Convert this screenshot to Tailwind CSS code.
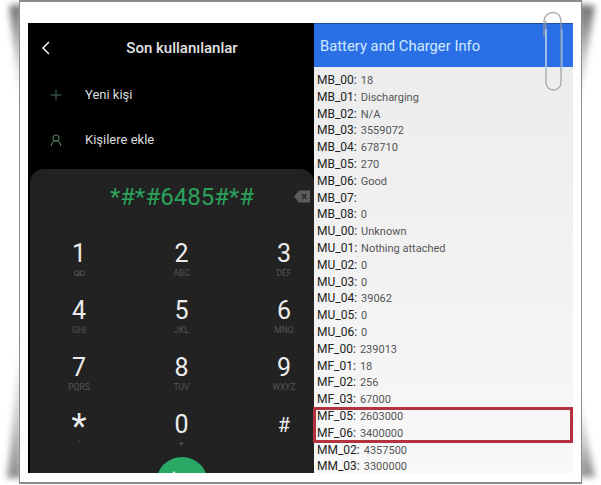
<!DOCTYPE html>
<html lang="en">
<head>
    <meta charset="UTF-8">
    <meta name="viewport" content="width=device-width, initial-scale=1.0">
    <title>Battery and Charger Info</title>
    <script src="https://cdn.jsdelivr.net/npm/@tailwindcss/browser@4"></script>
</head>
<body class="bg-white">
    <div class="relative w-[601px] h-[485px] overflow-hidden bg-white font-['Roboto',sans-serif]">
        <!-- Paper shadows behind the frame -->
        <svg class="absolute inset-0" width="601" height="485" viewBox="0 0 601 485">
            <defs>
                <filter id="soft" x="-50%" y="-50%" width="200%" height="200%"><feGaussianBlur stdDeviation="3"/></filter>
                <linearGradient id="fadeTop" x1="0" y1="0" x2="0" y2="1"><stop offset="0" stop-color="#707070"/><stop offset="0.5" stop-color="#c4c4c4"/><stop offset="1" stop-color="#fff"/></linearGradient>
                <linearGradient id="fadeBottom" x1="0" y1="0" x2="0" y2="1"><stop offset="0" stop-color="#fff"/><stop offset="0.6" stop-color="#c8c8c8"/><stop offset="1" stop-color="#8c8c8c"/></linearGradient>
            </defs>
            <polygon points="9,6 22,4 22,110" fill="url(#fadeTop)" filter="url(#soft)"/>
            <polygon points="22,330 22,478 7,478" fill="url(#fadeBottom)" filter="url(#soft)"/>
            <polygon points="578,4 595,6 578,110" fill="url(#fadeTop)" filter="url(#soft)"/>
            <polygon points="578,390 578,477 595,477" fill="url(#fadeBottom)" filter="url(#soft)"/>
        </svg>

        <!-- Framed picture -->
        <div class="absolute left-[19px] top-0 w-[563px] h-[484px] border-x border-y-2 border-[#8c8c8c] bg-white pl-2 pr-2 pt-[21px]">
            <div class="flex h-[450px]">
                <!-- Dialer -->
                <section class="w-[286px] shrink-0 bg-black flex flex-col overflow-hidden">
                    <header class="h-[49px] pt-px flex items-center relative shrink-0">
                        <svg class="ml-[12px]" width="12" height="16" viewBox="0 0 12 16" fill="none" stroke="#e8e8e8" stroke-width="1.6"><path d="M9 2 L3 8 L9 14"/></svg>
                        <h1 class="absolute left-0 w-[308px] text-center text-[15px] font-medium text-[#e4e4e4]">Son kullanılanlar</h1>
                    </header>
                    <div class="h-[45px] flex items-center shrink-0">
                        <svg class="ml-[22px]" width="12" height="12" viewBox="0 0 12 12" stroke="#4f6f5c" stroke-width="1"><path d="M6 0.5 V11.5 M0.5 6 H11.5"/></svg>
                        <span class="ml-[23px] text-[13px] text-[#dcdcdc]">Yeni kişi</span>
                    </div>
                    <div class="h-[46px] mb-[6px] flex items-center shrink-0">
                        <svg class="ml-[22px]" width="12" height="13" viewBox="0 0 12 13" fill="none" stroke="#4a7a5c" stroke-width="1.2"><circle cx="6" cy="4" r="3"/><path d="M1.2 12 C1.5 8.5 3.5 7 6 7 C8.5 7 10.5 8.5 10.8 12"/></svg>
                        <span class="ml-[23px] text-[13px] text-[#dcdcdc]">Kişilere ekle</span>
                    </div>
                    <!-- Keypad -->
                    <div class="relative flex-1 ml-[2px] rounded-t-[14px] bg-[#222223] overflow-hidden">
                        <div class="h-[68px] pb-[12px] flex items-center">
                            <span class="ml-[80px] text-[24px] text-[#2ba25c]">*#*#6485#*#</span>
                            <svg class="absolute left-[264px] top-[21px]" width="16" height="13" viewBox="0 0 16 13"><path d="M5 0.5 H16 V12.5 H5 L0 6.5 Z" fill="#5c5c5c"/><path d="M8 4 L12.5 9 M12.5 4 L8 9" stroke="#2a2a2a" stroke-width="1.4"/></svg>
                        </div>
                        <div class="pl-[29px] pr-[10px]">
                            <div class="h-[57px] flex justify-between">
                                <div class="w-[40px] flex flex-col items-center text-[#ececec]"><span class="text-[25px] leading-[34px]">1</span>
                                    <svg class="-mt-[1px]" width="11" height="6" viewBox="0 0 11 6" fill="none" stroke="#555" stroke-width="1"><circle cx="2.7" cy="3" r="2.2"/><circle cx="8.3" cy="3" r="2.2"/><path d="M2.7 5.2 H8.3"/></svg>
                                </div>
                                <div class="w-[40px] flex flex-col items-center text-[#ececec]"><span class="text-[25px] leading-[34px]">2</span><span class="-mt-[3px] text-[8.5px] leading-[10px] text-[#555]">ABC</span></div>
                                <div class="w-[40px] flex flex-col items-center text-[#ececec]"><span class="text-[25px] leading-[34px]">3</span><span class="-mt-[3px] text-[8.5px] leading-[10px] text-[#555]">DEF</span></div>
                            </div>
                            <div class="h-[57px] flex justify-between">
                                <div class="w-[40px] flex flex-col items-center text-[#ececec]"><span class="text-[25px] leading-[34px]">4</span><span class="-mt-[3px] text-[8.5px] leading-[10px] text-[#555]">GHI</span></div>
                                <div class="w-[40px] flex flex-col items-center text-[#ececec]"><span class="text-[25px] leading-[34px]">5</span><span class="-mt-[3px] text-[8.5px] leading-[10px] text-[#555]">JKL</span></div>
                                <div class="w-[40px] flex flex-col items-center text-[#ececec]"><span class="text-[25px] leading-[34px]">6</span><span class="-mt-[3px] text-[8.5px] leading-[10px] text-[#555]">MNO</span></div>
                            </div>
                            <div class="h-[57px] flex justify-between">
                                <div class="w-[40px] flex flex-col items-center text-[#ececec]"><span class="text-[25px] leading-[34px]">7</span><span class="-mt-[3px] text-[8.5px] leading-[10px] text-[#555]">PQRS</span></div>
                                <div class="w-[40px] flex flex-col items-center text-[#ececec]"><span class="text-[25px] leading-[34px]">8</span><span class="-mt-[3px] text-[8.5px] leading-[10px] text-[#555]">TUV</span></div>
                                <div class="w-[40px] flex flex-col items-center text-[#ececec]"><span class="text-[25px] leading-[34px]">9</span><span class="-mt-[3px] text-[8.5px] leading-[10px] text-[#555]">WXYZ</span></div>
                            </div>
                            <div class="h-[57px] flex justify-between">
                                <div class="w-[40px] flex flex-col items-center text-[#ececec]"><span class="h-[34px] text-[35px] leading-[38px]">*</span><span class="-mt-[3px] text-[8.5px] leading-[10px] text-[#555]">'</span></div>
                                <div class="w-[40px] flex flex-col items-center text-[#ececec]"><span class="text-[25px] leading-[34px]">0</span><span class="-mt-[3px] text-[8.5px] leading-[10px] text-[#555]">+</span></div>
                                <div class="w-[40px] flex flex-col items-center text-[#ececec]"><span class="text-[20px] leading-[34px]">#</span></div>
                            </div>
                        </div>
                        <!-- Call button, cut off by the picture edge -->
                        <div class="absolute left-[126px] top-[288px] w-[52px] h-[52px] rounded-full bg-[#2aa866]">
                            <svg class="absolute left-[15px] top-[14px]" width="6" height="4" viewBox="0 0 6 4"><path d="M3 0 L6 4 H0 Z" fill="#e6f5ec"/></svg>
                        </div>
                    </div>
                </section>

                <!-- Battery info -->
                <section class="relative w-[259px] shrink-0 bg-gradient-to-b from-[#ebebeb] to-[#f8f8f8]">
                    <header class="h-[44px] pt-px bg-[#2a6fe6] border-t border-[#1c4fa8] flex items-center pl-[6px]">
                        <h2 class="text-[14.8px] text-[#cfeaff]">Battery and Charger Info</h2>
                    </header>
                    <div class="pt-[5px] pl-[3px] text-[12px] text-[#222]">
                        <div class="h-[16.8px] leading-[16.8px]">MB_00: <span class="ml-px text-[11px] text-[#555]">18</span></div>
                        <div class="h-[16.8px] leading-[16.8px]">MB_01: <span class="ml-px text-[11px] text-[#555]">Discharging</span></div>
                        <div class="h-[16.8px] leading-[16.8px]">MB_02: <span class="ml-px text-[11px] text-[#555]">N/A</span></div>
                        <div class="h-[16.8px] leading-[16.8px]">MB_03: <span class="ml-px text-[11px] text-[#555]">3559072</span></div>
                        <div class="h-[16.8px] leading-[16.8px]">MB_04: <span class="ml-px text-[11px] text-[#555]">678710</span></div>
                        <div class="h-[16.8px] leading-[16.8px]">MB_05: <span class="ml-px text-[11px] text-[#555]">270</span></div>
                        <div class="h-[16.8px] leading-[16.8px]">MB_06: <span class="ml-px text-[11px] text-[#555]">Good</span></div>
                        <div class="h-[16.8px] leading-[16.8px]">MB_07:</div>
                        <div class="h-[16.8px] leading-[16.8px]">MB_08: <span class="ml-px text-[11px] text-[#555]">0</span></div>
                        <div class="h-[16.8px] leading-[16.8px]">MU_00: <span class="ml-px text-[11px] text-[#555]">Unknown</span></div>
                        <div class="h-[16.8px] leading-[16.8px]">MU_01: <span class="ml-px text-[11px] text-[#555]">Nothing attached</span></div>
                        <div class="h-[16.8px] leading-[16.8px]">MU_02: <span class="ml-px text-[11px] text-[#555]">0</span></div>
                        <div class="h-[16.8px] leading-[16.8px]">MU_03: <span class="ml-px text-[11px] text-[#555]">0</span></div>
                        <div class="h-[16.8px] leading-[16.8px]">MU_04: <span class="ml-px text-[11px] text-[#555]">39062</span></div>
                        <div class="h-[16.8px] leading-[16.8px]">MU_05: <span class="ml-px text-[11px] text-[#555]">0</span></div>
                        <div class="h-[16.8px] leading-[16.8px]">MU_06: <span class="ml-px text-[11px] text-[#555]">0</span></div>
                        <div class="h-[16.8px] leading-[16.8px]">MF_00: <span class="ml-px text-[11px] text-[#555]">239013</span></div>
                        <div class="h-[16.8px] leading-[16.8px]">MF_01: <span class="ml-px text-[11px] text-[#555]">18</span></div>
                        <div class="h-[16.8px] leading-[16.8px]">MF_02: <span class="ml-px text-[11px] text-[#555]">256</span></div>
                        <div class="h-[16.8px] leading-[16.8px]">MF_03: <span class="ml-px text-[11px] text-[#555]">67000</span></div>
                        <div class="relative">
                            <div class="h-[16.8px] leading-[16.8px]">MF_05: <span class="ml-px text-[11px] text-[#555]">2603000</span></div>
                            <div class="h-[16.8px] leading-[16.8px]">MF_06: <span class="ml-px text-[11px] text-[#555]">3400000</span></div>
                            <!-- Red highlight box -->
                            <div class="absolute -left-[4px] right-0 -top-[1px] -bottom-[1px] border-[3px] border-[#b3323f]"></div>
                        </div>
                        <div class="h-[16.8px] leading-[16.8px]">MM_02: <span class="ml-px text-[11px] text-[#555]">4357500</span></div>
                        <div class="h-[16.8px] leading-[16.8px]">MM_03: <span class="ml-px text-[11px] text-[#555]">3300000</span></div>
                    </div>
                </section>
            </div>
        </div>

        <!-- Paper clip -->
        <svg class="absolute left-[540px] top-[9px]" width="28" height="86" viewBox="0 0 28 86" fill="none">
            <path d="M6 12 V73 C6 78 9 81 13.5 81 C18 81 21 78 21 73 V13 C21 7 18 3.5 13 3.5 C8 3.5 4 7 4 13 V28" stroke="#9a9a9a" stroke-width="1.4" stroke-opacity="0.8"/>
            <path d="M6 20 V62" stroke="#a9ccf2" stroke-width="1.6"/>
            <path d="M22 20 V62" stroke="#a9ccf2" stroke-width="1"/>
        </svg>
    </div>
</body>
</html>
